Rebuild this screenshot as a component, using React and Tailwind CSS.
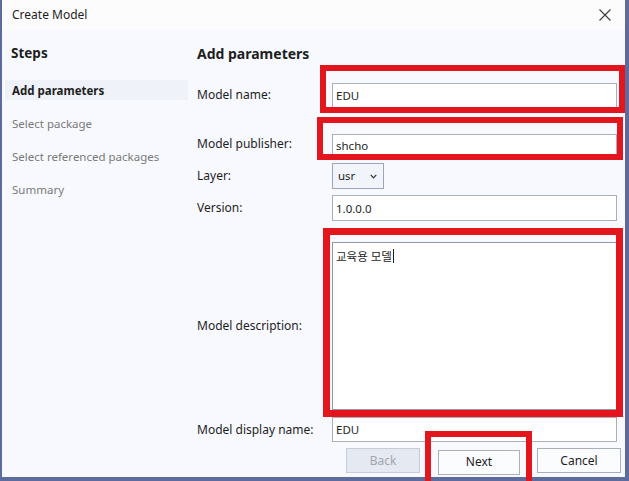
import { useState } from 'react'

const FONT = { fontFamily: '"Noto Sans", "Noto Sans CJK KR", sans-serif' }

const STEPS = ['Add parameters', 'Select package', 'Select referenced packages', 'Summary']

function RedBox({ className }) {
  return <div className={`pointer-events-none absolute border-[#e3161d] ${className}`} />
}

function Field({ label, children, className = '' }) {
  return (
    <div className={`flex items-center ${className}`}>
      <div className="w-[135px] shrink-0 text-[12px] text-[#1e1e1e]">{label}</div>
      {children}
    </div>
  )
}

export default function App() {
  const [name, setName] = useState('EDU')
  const [publisher, setPublisher] = useState('shcho')
  const [version, setVersion] = useState('1.0.0.0')
  const [desc, setDesc] = useState('교육용 모델')
  const [display, setDisplay] = useState('EDU')

  const inputCls =
    'h-full w-full border border-[#a9b0bc] bg-white px-[3px] text-[11.5px] text-[#1e1e1e] outline-none'

  return (
    <div className="h-[481px] w-[629px] bg-[#f7f9fe]" style={FONT}>
      <div className="flex h-full flex-col border-b-4 border-l-2 border-r-4 border-[#5d6c9c]">
        {/* Title bar */}
        <div className="flex h-[30px] shrink-0 items-center justify-between bg-[#fcfcfd] pl-[10px] pr-[14px]">
          <span className="text-[12px] text-[#1e1e1e]">Create Model</span>
          <svg width="12" height="12" viewBox="0 0 12 12" className="text-[#3c3c3c]">
            <path d="M0.5 0.5 L11.5 11.5 M11.5 0.5 L0.5 11.5" stroke="currentColor" strokeWidth="1.1" fill="none" />
          </svg>
        </div>

        <div className="flex flex-1">
          {/* Steps pane */}
          <div className="w-[186px] shrink-0 pl-[3px]">
            <div className="mt-[13px] pl-[6px] text-[13.5px] font-bold text-[#1e1e1e]">Steps</div>
            <div className="mt-[17px] flex flex-col">
              {STEPS.map((s, i) => (
                <div
                  key={s}
                  className={`flex h-[20px] items-center pl-[7px] text-[11.5px] ${
                    i === 0 ? 'bg-[#eff2f9] font-bold text-[#1e1e1e]' : 'mt-[13px] text-[#7a7a7a]'
                  }`}
                >
                  {s}
                </div>
              ))}
            </div>
          </div>

          {/* Parameters pane */}
          <div className="flex flex-1 flex-col pl-[9px] pr-[8px]">
            <div className="mt-[13px] text-[14px] font-bold text-[#1e1e1e]">Add parameters</div>

            <Field label="Model name:" className="mt-[18px] h-[25px]">
              <div className="relative h-full flex-1">
                <input className={inputCls} value={name} onChange={e => setName(e.target.value)} />
                <RedBox className="-bottom-[6px] -left-[12px] -right-[8px] -top-[17px] border-[6px]" />
              </div>
            </Field>

            <Field label="Model publisher:" className="mt-[25px] h-[24px]">
              <div className="relative h-full flex-1">
                <input className={inputCls} value={publisher} onChange={e => setPublisher(e.target.value)} />
                <RedBox className="-bottom-[4px] -left-[15px] -right-[6px] -top-[15px] border-[6px]" />
              </div>
            </Field>

            <Field label="Layer:" className="mt-[7px] h-[26px]">
              <div className="flex h-full w-[52px] items-center justify-between border border-[#9ea6b5] bg-[#f1f4fb] pl-[5px] pr-[6px] text-[11.5px] text-[#1e1e1e]">
                <span>usr</span>
                <svg width="7" height="5" viewBox="0 0 7 5">
                  <path d="M0.7 0.8 L3.5 3.8 L6.3 0.8" stroke="#333" strokeWidth="1.2" fill="none" />
                </svg>
              </div>
            </Field>

            <Field label="Version:" className="mt-[6px] h-[26px]">
              <input className={`${inputCls} flex-1`} value={version} onChange={e => setVersion(e.target.value)} />
            </Field>

            <Field label="Model description:" className="mt-[21px] h-[168px]">
              <div className="relative h-full flex-1">
                <div className="h-full w-full border border-[#8f98aa] bg-white px-[3px] pt-[4px] text-[11.5px] text-[#1e1e1e]">
                  <span>{desc}</span>
                  <span className="ml-[1px] inline-block h-[14px] w-px translate-y-[2px] bg-[#1e1e1e]" />
                </div>
                <RedBox className="-bottom-[7px] -left-[9px] -right-[6px] -top-[14px] border-[7px]" />
              </div>
            </Field>

            <Field label="Model display name:" className="mt-[7px] h-[25px]">
              <input className={`${inputCls} flex-1`} value={display} onChange={e => setDisplay(e.target.value)} />
            </Field>

            <div className="-mr-[4px] mt-[6px] flex h-[25px] justify-end gap-[18px]">
              <button
                disabled
                className="w-[74px] border border-[#c7cdd8] bg-[#e4e9f2] text-[12px] text-[#a2a6ad]"
              >
                Back
              </button>
              <div className="relative">
                <button className="h-full w-[82px] border border-[#a9b0bc] bg-[#fbfcfe] text-[12px] text-[#1e1e1e]">
                  Next
                </button>
                <RedBox className="-bottom-[9px] -left-[13px] -right-[12px] -top-[17px] border-[6px] border-b-0" />
              </div>
              <button className="-ml-[1px] w-[84px] border border-[#a9b0bc] bg-[#fbfcfe] text-[12px] text-[#1e1e1e]">
                Cancel
              </button>
            </div>
          </div>
        </div>
      </div>
    </div>
  )
}
